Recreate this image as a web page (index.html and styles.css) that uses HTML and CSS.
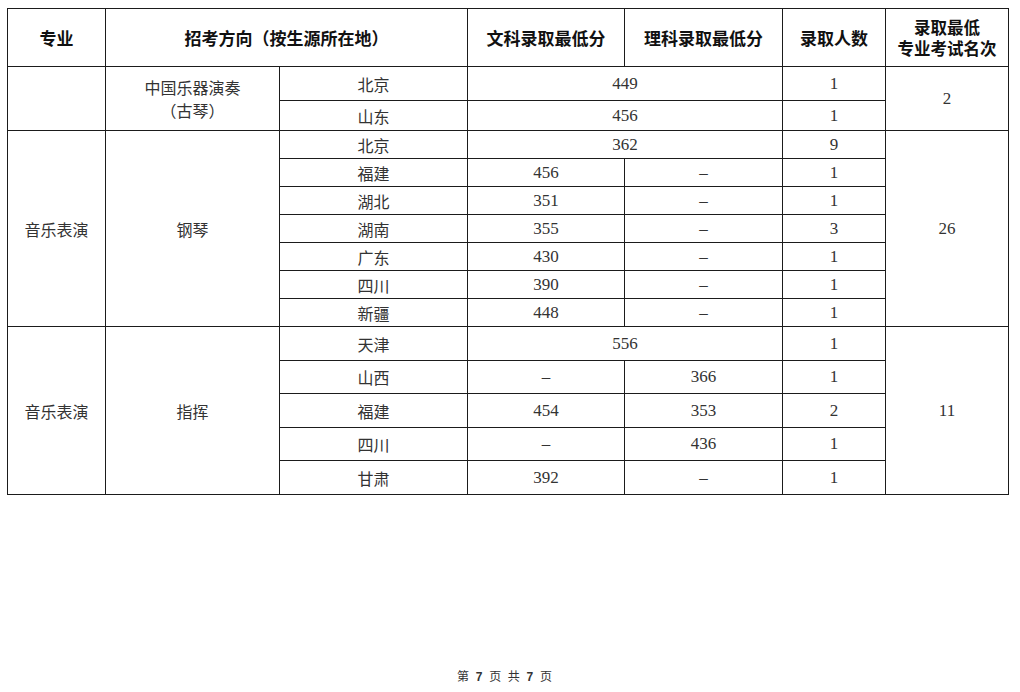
FILE: index.html
```html
<!DOCTYPE html>
<html lang="zh-CN">
<head>
<meta charset="utf-8">
<title>录取情况</title>
<link rel="stylesheet" href="styles.css">
</head>
<body>
<div class="page">
<table class="score">
  <colgroup>
    <col class="c1"><col class="c2"><col class="c3"><col class="c4"><col class="c5"><col class="c6"><col class="c7">
  </colgroup>
  <thead>
    <tr class="h">
      <th>专业</th>
      <th colspan="2">招考方向（按生源所在地）</th>
      <th>文科录取最低分</th>
      <th>理科录取最低分</th>
      <th>录取人数</th>
      <th class="stack">录取最低<br>专业考试名次</th>
    </tr>
  </thead>
  <tbody>
    <tr class="r34">
      <td rowspan="2"></td>
      <td rowspan="2" class="two">中国乐器演奏<br>（古琴）</td>
      <td>北京</td>
      <td colspan="2" class="num">449</td>
      <td class="num">1</td>
      <td rowspan="2" class="num">2</td>
    </tr>
    <tr class="r30">
      <td>山东</td>
      <td colspan="2" class="num">456</td>
      <td class="num">1</td>
    </tr>

    <tr class="r28">
      <td rowspan="7">音乐表演</td>
      <td rowspan="7">钢琴</td>
      <td>北京</td>
      <td colspan="2" class="num">362</td>
      <td class="num">9</td>
      <td rowspan="7" class="num">26</td>
    </tr>
    <tr class="r28"><td>福建</td><td class="num">456</td><td class="num">–</td><td class="num">1</td></tr>
    <tr class="r28"><td>湖北</td><td class="num">351</td><td class="num">–</td><td class="num">1</td></tr>
    <tr class="r28"><td>湖南</td><td class="num">355</td><td class="num">–</td><td class="num">3</td></tr>
    <tr class="r28"><td>广东</td><td class="num">430</td><td class="num">–</td><td class="num">1</td></tr>
    <tr class="r28"><td>四川</td><td class="num">390</td><td class="num">–</td><td class="num">1</td></tr>
    <tr class="r28"><td>新疆</td><td class="num">448</td><td class="num">–</td><td class="num">1</td></tr>

    <tr class="r34b">
      <td rowspan="5">音乐表演</td>
      <td rowspan="5">指挥</td>
      <td>天津</td>
      <td colspan="2" class="num">556</td>
      <td class="num">1</td>
      <td rowspan="5" class="num">11</td>
    </tr>
    <tr class="r33"><td>山西</td><td class="num">–</td><td class="num">366</td><td class="num">1</td></tr>
    <tr class="r34b"><td>福建</td><td class="num">454</td><td class="num">353</td><td class="num">2</td></tr>
    <tr class="r33"><td>四川</td><td class="num">–</td><td class="num">436</td><td class="num">1</td></tr>
    <tr class="r34b"><td>甘肃</td><td class="num">392</td><td class="num">–</td><td class="num">1</td></tr>
  </tbody>
</table>
<div class="footer">第 <b>7</b> 页 共 <b>7</b> 页</div>
</div>
</body>
</html>
```

FILE: styles.css
```css
html, body {
  margin: 0;
  padding: 0;
  background: #ffffff;
}

.page {
  padding: 8px 0 0 7px;
  width: 1013px;
  height: 684px;
  position: relative;
}

.score {
  border-collapse: collapse;
  table-layout: fixed;
  width: 1001px;
  font-family: "Noto Sans CJK SC", "Liberation Serif", serif;
  font-size: 16px;
  color: #333;
}

.score col.c1 { width: 98px; }
.score col.c2 { width: 174px; }
.score col.c3 { width: 188px; }
.score col.c4 { width: 157px; }
.score col.c5 { width: 158px; }
.score col.c6 { width: 103px; }
.score col.c7 { width: 123px; }

.score th,
.score td {
  border: 1.5px solid #1b1b1b;
  padding: 0;
  text-align: center;
  vertical-align: middle;
  line-height: 20px;
  font-weight: 400;
}

.score th {
  font-family: "Noto Sans CJK SC", sans-serif;
  font-weight: 700;
  font-size: 17px;
  color: #111;
  line-height: 22px;
}

.score th.stack {
  font-size: 16.5px;
  line-height: 21px;
}

.score tr.h { height: 58px; }
.score tr.r34 { height: 34px; }
.score tr.r30 { height: 30px; }
.score tr.r28 { height: 28px; }
.score tr.r34b { height: 34px; }
.score tr.r33 { height: 33px; }

.score td.num {
  font-family: "Liberation Serif", serif;
  font-size: 17px;
}

.score td.two {
  line-height: 23px;
}

.footer {
  position: absolute;
  left: 0;
  right: 0;
  top: 667px;
  text-align: center;
  font-family: "Noto Sans CJK SC", sans-serif;
  font-size: 12px;
  color: #333;
  word-spacing: 4px;
  padding-right: 11px;
}

.footer b {
  font-family: "Liberation Sans", sans-serif;
  font-weight: 700;
}
```
